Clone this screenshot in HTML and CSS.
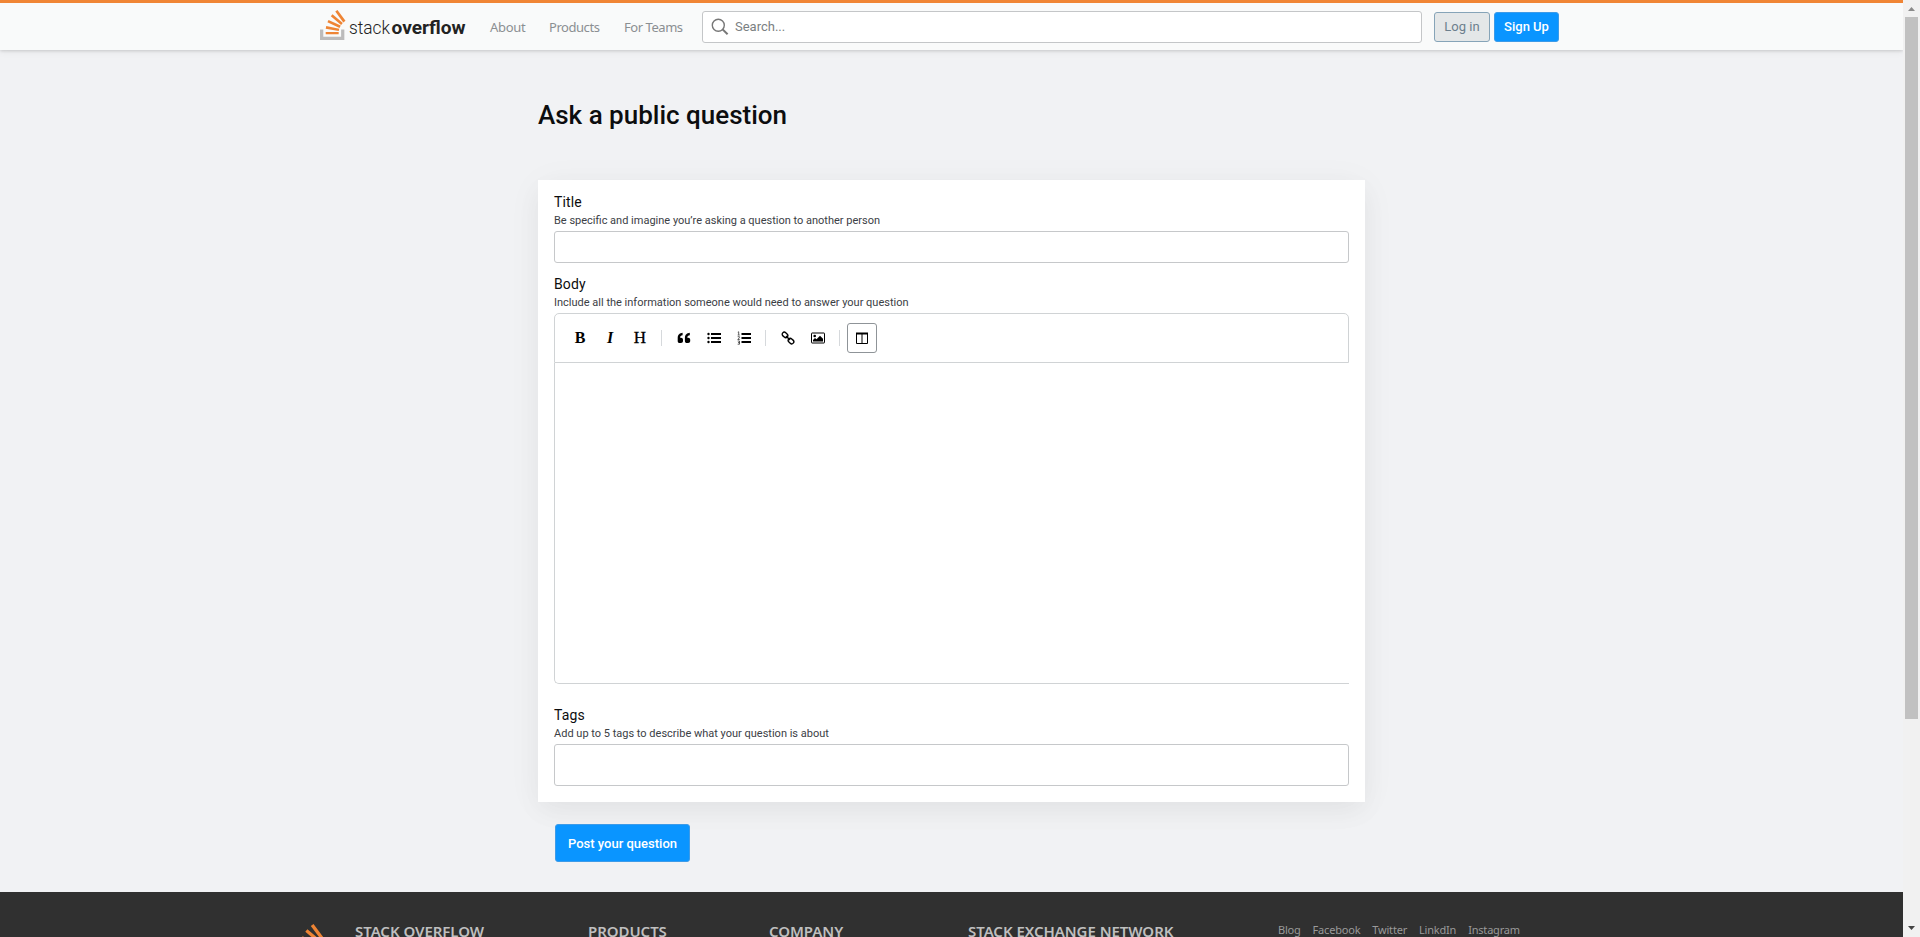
FILE: index.html
```
<!DOCTYPE html>
<html lang="en">
<head>
<meta charset="utf-8">
<title>Ask a public question</title>
<link rel="stylesheet" href="styles.css">
</head>
<body>
<svg class="defs" width="0" height="0">
  <symbol id="glyph" viewBox="0 0 32 37">
    <path fill="#bcbbbb" d="M26 33v-9h4v13H0V24h4v9h22Z"/>
    <path fill="#ee8434" d="m21.5 0-2.7 2 9.9 13.3 2.7-2L21.5 0ZM26 18.4 13.3 7.8l2.1-2.5 12.7 10.6-2.1 2.5ZM9.1 15.2l15 7 1.4-3-15-7-1.4 3Zm14 10.79.68-2.95-16.1-3.35L7 23l16.1 2.99ZM23 30H7v-3h16v3Z"/>
  </symbol>
</svg>
<div class="viewport">
  <div class="page">
    <header class="topbar">
      <a class="logo">
        <svg class="logo-glyph" width="26" height="30"><use href="#glyph"/></svg>
        <svg class="logo-name" width="118" height="26">
          <text x="1" y="20" font-weight="300" textLength="41" lengthAdjust="spacingAndGlyphs">stack</text>
          <text x="43.500" y="20" font-weight="700" textLength="74" lengthAdjust="spacingAndGlyphs">overflow</text>
        </svg>
      </a>
      <nav class="nav">
        <a class="nav-about">About</a>
        <a class="nav-products">Products</a>
        <a class="nav-teams">For Teams</a>
      </nav>
      <div class="search">
        <svg width="18" height="18" viewBox="0 0 18 18" fill="none" stroke="#777"><circle cx="7.3" cy="7.2" r="6" stroke-width="1.4"/><path d="m11.6 11.4 5 4.9" stroke-width="2"/></svg>
        <span>Search...</span>
      </div>
      <a class="btn login">Log in</a>
      <a class="btn signup">Sign Up</a>
    </header>

    <main class="content">
      <h1>Ask a public question</h1>
      <section class="card">
        <label>Title</label>
        <p class="hint hint-title">Be specific and imagine you’re asking a question to another person</p>
        <div class="input"></div>

        <label class="body-label">Body</label>
        <p class="hint hint-body">Include all the information someone would need to answer your question</p>
        <div class="toolbar">
          <span class="tool serif bold">B</span>
          <span class="tool serif italic">I</span>
          <span class="tool serif heading">H</span>
          <i class="sep"></i>
          <span class="tool"><svg width="14" height="12" viewBox="0 0 14 12"><path d="M5.600.8C3 1 .7 2.600.7 6v2.900C.7 10.200 1.500 11 2.700 11H4c1.200 0 2-.8 2-2V7.700c0-1.200-.8-2-2-2h-.900c0-1.500.9-2.300 2.500-2.500ZM12.800.8C10.200 1 7.900 2.600 7.900 6v2.900c0 1.300.8 2.100 2 2.100h1.300c1.200 0 2-.8 2-2V7.700c0-1.200-.8-2-2-2h-.9c0-1.500.9-2.300 2.500-2.500Z"/></svg></span>
          <span class="tool"><svg width="14" height="12" viewBox="0 0 14 12"><path d="M4 1h10v2H4zM4 5h10v2H4zM4 9h10v2H4z"/><circle cx="1.500" cy="2" r="1.200"/><circle cx="1.500" cy="6" r="1.200"/><circle cx="1.500" cy="10" r="1.200"/></svg></span>
          <span class="tool"><svg width="14" height="14" viewBox="0 0 14 14"><path d="M4.500 2H14v2H4.500zM4.500 6H14v2H4.500zM4.500 10H14v2H4.500z"/><path fill="none" stroke="#333" stroke-width=".8" d="M.8 1.200 1.700.8v3M.7 4 2.700 4M.7 5.700h1.700v1L.8 8.500h1.900M.7 10h1.800v3.200H.7M1 11.600h1.500"/></svg></span>
          <i class="sep"></i>
          <span class="tool"><svg width="14" height="14" viewBox="0 0 14 14" fill="none" stroke="#000" stroke-width="1.400"><rect x="1" y="1.800" width="6" height="4.200" rx="2.100" transform="rotate(42 4 3.900)"/><rect x="7" y="8" width="6" height="4.200" rx="2.100" transform="rotate(42 10 10.100)"/><path d="m5 5 4 4"/></svg></span>
          <span class="tool"><svg width="14" height="12" viewBox="0 0 14 12"><rect x=".5" y="1" width="13" height="10" rx=".5" fill="none" stroke="#000"/><circle cx="3.700" cy="4" r="1.300"/><path d="M2 9.500V8l2-2 1.500 1.300L9 3.700l3 3v2.800Z"/></svg></span>
          <i class="sep"></i>
          <span class="tool split"><svg width="12" height="12" viewBox="0 0 12 12" fill="none" stroke="#000"><path d="M.5 1v10.500h11V1M6 2v9.500"/><path stroke-width="2" d="M0 1.500h12"/></svg></span>
        </div>
        <div class="editor"></div>

        <label class="tags-label">Tags</label>
        <p class="hint hint-tags">Add up to 5 tags to describe what your question is about</p>
        <div class="input tags"></div>
      </section>
      <a class="btn post">Post your question</a>
    </main>

    <footer class="footer">
      <svg class="footer-glyph" width="32" height="37"><use href="#glyph"/></svg>
      <h5 class="f-so">STACK OVERFLOW</h5>
      <h5 class="f-products">PRODUCTS</h5>
      <h5 class="f-company">COMPANY</h5>
      <h5 class="f-network">STACK EXCHANGE NETWORK</h5>
      <div class="social"><a>Blog</a><a>Facebook</a><a>Twitter</a><a>LinkdIn</a><a>Instagram</a></div>
    </footer>
  </div>
  <div class="scrollbar">
    <svg width="7" height="4"><path fill="#8a8a8a" d="M0 4h7L3.500 0Z"/></svg>
    <div class="thumb"></div>
    <svg width="7" height="4"><path fill="#444" d="M0 0h7L3.500 4Z"/></svg>
  </div>
</div>
</body>
</html>
```
FILE: styles.css
```
* { box-sizing: border-box; }
body { margin: 0; overflow: hidden; font-family: Roboto, sans-serif; color: #232629; }
.defs { display: block; }
.viewport { display: flex; width: 1920px; height: 937px; overflow: hidden; }
.page { display: flex; flex-direction: column; width: 1903px; height: 937px; overflow: hidden; background: #f1f2f4; }

.topbar { display: flex; align-items: center; flex: none; height: 50px; padding-left: 320px; border-top: 3px solid #f08535; background: #f9fafa; box-shadow: 0 1px 3px rgba(0,0,0,.14), 0 2px 8px rgba(0,0,0,.05); }
.logo { display: flex; align-items: center; gap: 2px; width: 170px; }
.logo-glyph { margin-bottom: 4px; }
.logo-name text { font-family: Roboto, sans-serif; font-size: 19px; fill: #222; }
.nav { display: flex; width: 212px; font: 13px/20px "Noto Sans", sans-serif; color: #8b8f92; white-space: nowrap; }
.nav-about { width: 59px; letter-spacing: -.3px; }
.nav-products { width: 75px; letter-spacing: -.45px; }
.nav-teams { letter-spacing: -.45px; }
.search { display: flex; align-items: center; gap: 6px; width: 720px; height: 32px; padding-left: 8px; margin-right: 12px; border: 1px solid #c4c6c8; border-radius: 3px; background: #fff; font-size: 13px; color: #7b7f82; }
.btn { display: flex; align-items: center; justify-content: center; border-radius: 3px; border: 1px solid #3d9be8; background: #0a95ff; color: #fff; font-size: 13px; font-weight: 500; }
.login { width: 56px; height: 30px; margin-right: 4px; background: #e4e7e8; border-color: #86a4b8; color: #6c7f8d; font-weight: 400; }
.signup { width: 65px; height: 30px; }

.content { flex: none; width: 827px; height: 842px; margin-left: 538px; }
h1 { margin: 0; padding-top: 48px; height: 130px; font-size: 26px; line-height: 34px; font-weight: 500; color: #0c0d0e; }
.card { height: 622px; padding: 13px 16px 16px; background: #fff; box-shadow: 0 10px 25px rgba(0,0,0,.04), 0 4px 36px rgba(0,0,0,.04); }
label { display: block; font-size: 14px; line-height: 18px; font-weight: 400; letter-spacing: .15px; color: #0c0d0e; }
.hint { margin: 3px 0 3px; font-size: 11px; line-height: 14px; color: #3b4045; white-space: nowrap; }
.input { height: 32px; border: 1px solid #c6c8ca; border-radius: 3px; }
.body-label { margin-top: 12px; }
.toolbar { display: flex; align-items: center; height: 50px; padding-left: 10px; border: 1px solid #d0d3d5; border-radius: 5px 5px 0 0; }
.tool { display: flex; align-items: center; justify-content: center; width: 30px; height: 30px; }
.serif { font-family: "Liberation Serif", serif; font-size: 16px; color: #000; }
.bold { font-weight: 700; }
.italic { font-style: italic; font-weight: 700; }
.heading { font-size: 17px; -webkit-text-stroke: .3px #000; }
.sep { width: 1px; height: 16px; margin: 0 7px 0 6px; background: #d6d9dc; }
.split { border: 1px solid #8f9498; border-radius: 3px; }
.editor { height: 321px; border: solid #d0d3d5; border-width: 0 0 1px 1px; border-radius: 0 0 0 5px; }
.tags-label { margin-top: 22px; }
.tags { height: 42px; }
.post { width: 135px; height: 38px; margin: 22px 0 0 17px; }

.footer { display: flex; align-items: flex-start; flex: none; width: 1903px; height: 160px; padding: 32px 0 0 292px; background: #303030; font-family: "Noto Sans", sans-serif; white-space: nowrap; }
.footer-glyph { flex: none; margin-right: 31px; }
h5 { flex: none; margin: -3px 0 0; font-size: 15px; line-height: 20px; font-weight: 600; letter-spacing: -.05px; color: #bfbfbf; }
.f-so { width: 233px; }
.f-products { width: 181px; }
.f-company { width: 199px; }
.f-network { width: 310px; }
.social { display: flex; gap: 12px; margin-top: -3px; font-size: 11px; line-height: 18px; letter-spacing: -.2px; color: #9a9a9a; }

.scrollbar { display: flex; flex-direction: column; align-items: center; width: 17px; height: 937px; padding: 7px 0; background: #f1f1f1; }
.thumb { width: 13px; height: 702px; margin: 6px 0 207px; background: #c1c1c1; }
```
